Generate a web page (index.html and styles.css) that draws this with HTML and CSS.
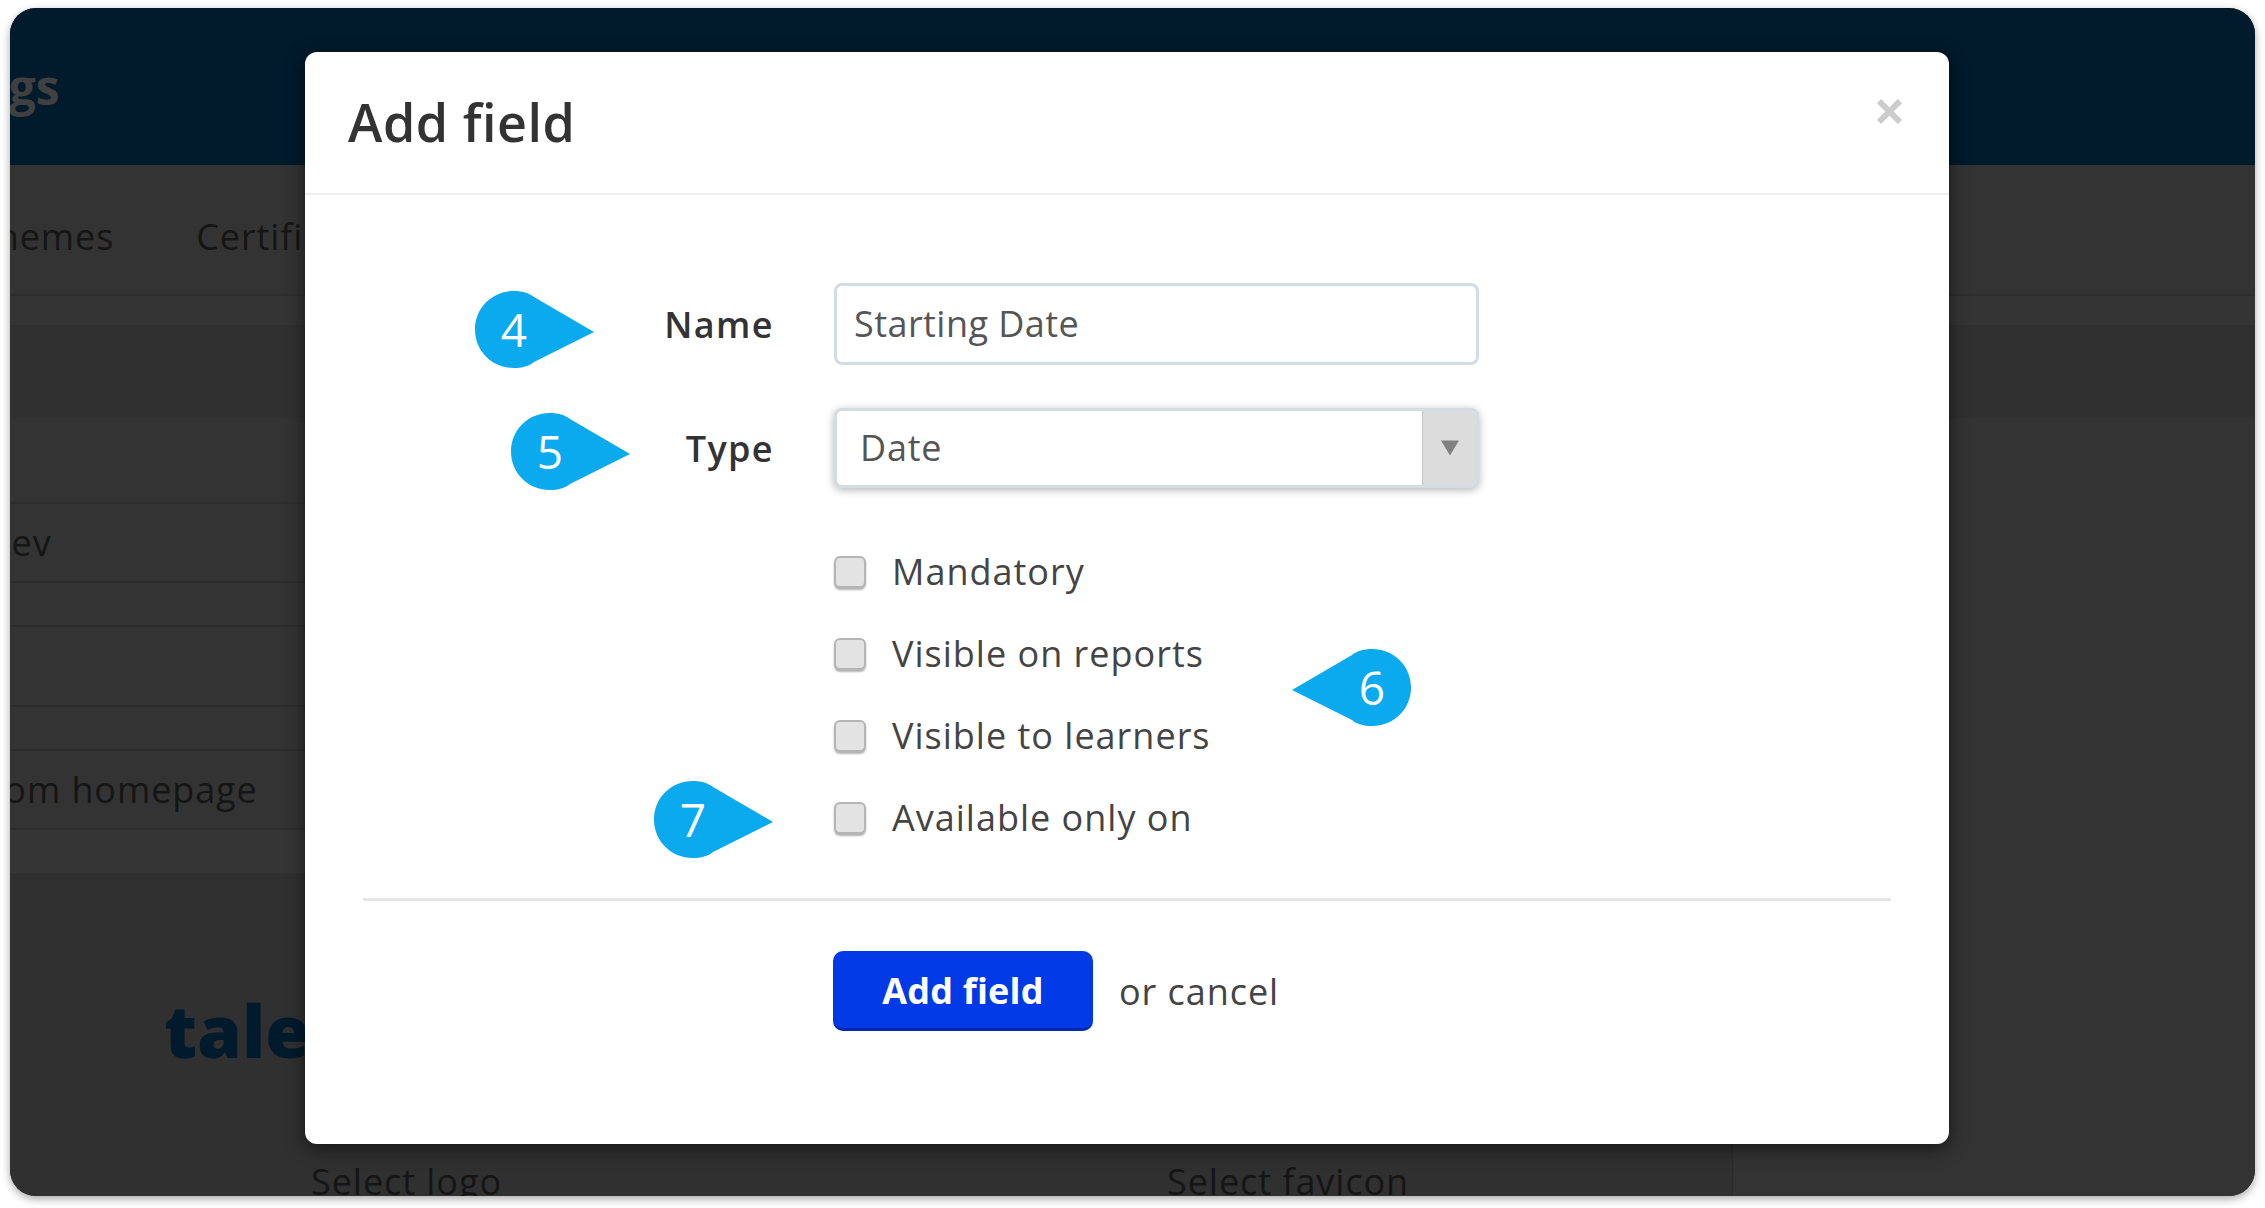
FILE: index.html
```html
<!DOCTYPE html>
<html lang="en">
<head>
<meta charset="utf-8">
<title>Add field</title>
<link rel="stylesheet" href="styles.css">
</head>
<body>
<div class="window">
  <header class="top"><h1 class="top-title">Settings</h1></header>
  <nav class="tabs"><span class="tab tab-themes">Themes</span><span class="tab">Certifications</span></nav>
  <div class="strip"></div>
  <div class="band"></div>
  <div class="content">
    <main class="main">
      <div class="row row-a"></div>
      <div class="row row-b"><span class="row-text row-text-dev">Talent dev</span></div>
      <div class="row row-c"></div>
      <div class="row row-d"></div>
      <div class="row row-c"></div>
      <div class="row row-b"><span class="row-text row-text-home">Custom homepage</span></div>
      <div class="row row-e"></div>
      <div class="uploads">
        <div class="upload upload-logo"><span class="logo-word">talentlms</span><span class="upload-label">Select logo</span></div>
        <div class="upload upload-favicon"><span class="upload-label">Select favicon</span></div>
      </div>
    </main>
    <aside class="side"></aside>
  </div>

  <section class="modal">
    <div class="modal-head">
      <h2 class="modal-title">Add field</h2>
      <svg class="close" viewBox="0 0 25 27" aria-label="close"><path d="M2 3 L23 24 M23 3 L2 24"/></svg>
    </div>
    <form class="form">
      <div class="field field-name">
        <label class="label">Name</label>
        <div class="input">Starting Date</div>
      </div>
      <div class="field field-type">
        <label class="label">Type</label>
        <div class="select"><span class="select-value">Date</span><span class="select-arrow"><svg viewBox="0 0 12 12" class="arrow"><path d="M0 1 H12 L6 11 Z"/></svg></span></div>
      </div>
      <div class="checks">
        <div class="check"><span class="box"></span><span class="check-text">Mandatory</span></div>
        <div class="check"><span class="box"></span><span class="check-text">Visible on reports</span></div>
        <div class="check"><span class="box"></span><span class="check-text">Visible to learners</span></div>
        <div class="check"><span class="box"></span><span class="check-text">Available only on</span></div>
      </div>
      <div class="rule"></div>
      <div class="actions"><button type="button" class="btn">Add field</button><span class="cancel">or cancel</span></div>
    </form>

    <div class="pin pin-4"><svg viewBox="0 0 119 77" class="pin-shape"><path d="M39 0C47 0 54 2 59 6L119 41L59 71C54 75 47 77 39 77C17 77 0 60 0 38.5C0 17 17 0 39 0Z"/></svg><span class="pin-num">4</span></div>
    <div class="pin pin-5"><svg viewBox="0 0 119 77" class="pin-shape"><path d="M39 0C47 0 54 2 59 6L119 41L59 71C54 75 47 77 39 77C17 77 0 60 0 38.5C0 17 17 0 39 0Z"/></svg><span class="pin-num">5</span></div>
    <div class="pin pin-6"><svg viewBox="0 0 119 77" class="pin-shape pin-flip"><path d="M39 0C47 0 54 2 59 6L119 41L59 71C54 75 47 77 39 77C17 77 0 60 0 38.5C0 17 17 0 39 0Z"/></svg><span class="pin-num">6</span></div>
    <div class="pin pin-7"><svg viewBox="0 0 119 77" class="pin-shape"><path d="M39 0C47 0 54 2 59 6L119 41L59 71C54 75 47 77 39 77C17 77 0 60 0 38.5C0 17 17 0 39 0Z"/></svg><span class="pin-num">7</span></div>
  </section>
</div>
</body>
</html>
```
FILE: styles.css
```css
* { box-sizing: border-box; }
html, body { margin: 0; height: 100%; background: #fff; }
body {
  padding: 8px 10px 12px;
  font-family: "Open Sans", "Noto Sans", sans-serif;
  overflow: hidden;
}
.window {
  position: relative;
  width: 2245px;
  height: 1188px;
  border-radius: 26px;
  overflow: hidden;
  background: #333;
  display: flex;
  flex-direction: column;
  box-shadow: 0 3px 8px rgba(0, 0, 0, .35);
}
.top {
  height: 157px;
  background: #011a2c;
  display: flex;
  align-items: center;
  flex: none;
}
.top-title {
  margin: 0 0 0 -144px;
  font-size: 48px;
  font-weight: 700;
  line-height: 1;
  color: #404040;
}
.tabs {
  height: 131px;
  flex: none;
  display: flex;
  align-items: center;
  gap: 82px;
  background: #333;
  border-bottom: 2px solid #2d2d2d;
  padding-top: 14px;
  font-size: 36px;
  letter-spacing: .9px;
  color: #151515;
}
.tab-themes { margin-left: -34px; }
.strip { height: 29px; flex: none; background: #343434; }
.band { height: 93px; flex: none; background: #303030; }
.content { flex: 1; display: flex; min-height: 0; }
.main { width: 1723px; flex: none; display: flex; flex-direction: column; border-right: 1px solid #2b2b2b; }
.side { flex: 1; background: #333; }
.row {
  flex: none;
  background: #333;
  border-bottom: 2px solid #2d2d2d;
  display: flex;
  align-items: center;
  font-size: 36px;
  letter-spacing: .9px;
  color: #151515;
}
.row-a { height: 86px; }
.row-b { height: 79px; }
.row-c { height: 44px; }
.row-d { height: 80px; }
.row-e { height: 43px; border-bottom: 0; background: #353535; }
.row-text-dev { margin-left: -141px; }
.row-text-home { margin-left: -84px; }
.uploads { flex: 1; display: flex; background: #303030; }
.upload { position: relative; overflow: hidden; display: flex; flex-direction: column; }
.upload-logo { width: 857px; padding-left: 154px; padding-top: 118px; }
.upload-favicon { flex: 1; justify-content: flex-end; padding-left: 300px; }
.logo-word {
  font-weight: 800;
  font-size: 72px;
  line-height: 78px;
  color: #011a2c;
}
.upload-label {
  position: absolute;
  bottom: -11px;
  font-size: 36px;
  letter-spacing: .95px;
  line-height: 50px;
  color: #151515;
}
.upload-logo .upload-label { left: 301px; }
.upload-favicon .upload-label { left: 300px; }

/* Modal sits over the page */
.modal {
  position: absolute;
  left: 295px;
  top: 44px;
  width: 1644px;
  height: 1092px;
  background: #fff;
  border-radius: 12px;
  box-shadow: 0 5px 18px rgba(0, 0, 0, .55);
  display: flex;
  flex-direction: column;
}
.modal-head {
  height: 143px;
  flex: none;
  border-bottom: 2px solid #eee;
  display: flex;
  justify-content: space-between;
  padding: 0 47px 0 43px;
}
.modal-title {
  margin: 35px 0 0;
  font-size: 52px;
  line-height: 70px;
  font-weight: 600;
  letter-spacing: .5px;
  color: #333;
}
.close { width: 25px; height: 27px; margin-top: 46px; fill: none; stroke: #ccc; stroke-width: 6; }
.form { flex: 1; display: flex; flex-direction: column; padding-top: 88px; }
.field { display: flex; align-items: center; }
.label {
  width: 469px;
  margin-right: 60px;
  text-align: right;
  font-size: 36px;
  font-weight: 600;
  color: #333;
  letter-spacing: 1.4px;
}
.field-name { height: 82px; }
.field-type { height: 80px; margin-top: 43px; }
.input, .select {
  width: 645px;
  font-size: 36px;
  letter-spacing: .45px;
  color: #555;
  background: #fff;
  border: 3px solid #d3dce2;
  border-radius: 8px;
}
.input { height: 82px; line-height: 76px; padding-left: 17px; }
.select {
  height: 80px;
  display: flex;
  justify-content: space-between;
  overflow: hidden;
  box-shadow: 0 2px 8px rgba(0, 0, 0, .3);
  line-height: 74px;
}
.select-value { padding-left: 23px; letter-spacing: .8px; }
.select-arrow {
  width: 54px;
  background: #dcdcdc;
  border-left: 1px solid #c6c6c6;
  display: flex;
  align-items: center;
  justify-content: center;
}
.arrow { width: 18px; height: 18px; fill: #808080; }
.checks { margin-top: 42px; margin-left: 529px; display: flex; flex-direction: column; }
.check { height: 82px; display: flex; align-items: center; }
.box {
  width: 32px;
  height: 32px;
  background: #e3e3e3;
  border: 2px solid #b5b5b5;
  border-radius: 6px;
  box-shadow: 0 2px 2px rgba(0, 0, 0, .3);
  margin-top: 2px;
  margin-right: 26px;
}
.check-text { font-size: 36px; color: #444; letter-spacing: 1px; }
.rule { height: 3px; margin: 40px 58px 0 58px; background: #e5e5e5; flex: none; }
.actions { margin: 50px 0 0 528px; display: flex; align-items: center; }
.btn {
  width: 260px;
  height: 80px;
  border: 0;
  border-bottom: 3px solid #0029b0;
  border-radius: 10px;
  background: #0039e6;
  color: #fff;
  font: 700 36px "Open Sans", sans-serif;
  letter-spacing: .2px;
  padding-top: 3px;
}
.cancel { margin-left: 26px; font-size: 36px; color: #444; letter-spacing: .95px; }

/* Numbered callouts laid over the form */
.pin { position: absolute; width: 119px; height: 77px; }
.pin-shape { display: block; width: 119px; height: 77px; fill: #0ba9ee; }
.pin-flip { transform: scaleX(-1); }
.pin-num {
  position: absolute;
  top: 0;
  left: 0;
  width: 78px;
  height: 77px;
  text-align: center;
  font-weight: 400;
  font-size: 46px;
  line-height: 77px;
  color: #fff;
}
.pin-4 { left: 170px; top: 239px; }
.pin-5 { left: 206px; top: 361px; }
.pin-6 { left: 987px; top: 597px; }
.pin-6 .pin-num { left: 41px; }
.pin-7 { left: 349px; top: 729px; }
```
